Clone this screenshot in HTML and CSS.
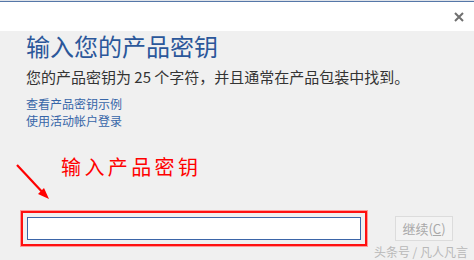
FILE: index.html
```html
<!DOCTYPE html>
<html lang="zh-CN">
<head>
<meta charset="utf-8">
<link rel="stylesheet" href="styles.css">
</head>
<body>
<div class="strip"></div>
<header class="header">
  <svg class="close" width="10" height="10" viewBox="0 0 10 10"><path d="M1 1L9 9M9 1L1 9" stroke="#707070" stroke-width="2"/></svg>
</header>
<main class="content">
  <h1 class="title">输入您的产品密钥</h1>
  <p class="desc">您的产品密钥为 25 个字符，并且通常在产品包装中找到。</p>
  <a class="link">查看产品密钥示例</a>
  <a class="link">使用活动帐户登录</a>
  <div class="note">
    <svg class="arrow" width="40" height="40" viewBox="0 0 40 40"><path d="M1 1L30 32" stroke="#ff0000" stroke-width="2.2"/><path d="M33 35L22 30L28 24Z" fill="#ff0000"/></svg>
    <span class="note-text">输入产品密钥</span>
  </div>
  <div class="row">
    <div class="redbox"><div class="input"></div></div>
    <button class="btn">继续(<u>C</u>)</button>
  </div>
</main>
<div class="mark">头条号 / 凡人凡言</div>
</body>
</html>
```
FILE: styles.css
```css
html, body {
  margin: 0;
  padding: 0;
}
body {
  width: 474px;
  height: 260px;
  overflow: hidden;
  background: #f0f0f0;
  font-family: "Noto Sans CJK SC", "Noto Sans", sans-serif;
  position: relative;
}
.strip {
  height: 2px;
  background: #dfe3e9;
  border-bottom: 1px solid #5677a8;
  box-sizing: border-box;
}
.header {
  height: 29px;
  background: #ffffff;
  display: flex;
  justify-content: flex-end;
  align-items: flex-start;
  padding-right: 10px;
  box-sizing: border-box;
}
.close {
  margin-top: 10px;
}
.content {
  padding-left: 26px;
  display: flex;
  flex-direction: column;
  align-items: flex-start;
}
.title {
  margin: 1px 0 0;
  font-size: 24px;
  line-height: 28px;
  font-weight: 400;
  color: #2b579a;
}
.desc {
  margin: 7px 0 0;
  font-size: 15px;
  line-height: 20px;
  color: #333333;
}
.link {
  font-size: 12px;
  line-height: 17px;
  color: #3766a8;
}
.desc + .link {
  margin-top: 8px;
}
.note {
  display: flex;
  align-items: flex-start;
  margin-top: 26px;
  margin-left: -10px;
  height: 56px;
}
.arrow {
  margin-top: 9px;
}
.note-text {
  margin-left: 5px;
  font-size: 20px;
  line-height: 24px;
  letter-spacing: 3.4px;
  color: #ff0000;
}
.row {
  display: flex;
  align-items: center;
  margin-left: -5px;
}
.redbox {
  width: 346px;
  height: 35px;
  box-sizing: border-box;
  border: 2px solid #ff1010;
  box-shadow: 0 0 0 1px #ff9a9a;
  padding: 4px;
}
.input {
  width: 334px;
  height: 23px;
  box-sizing: border-box;
  background: #ffffff;
  border: 1px solid #3b65a8;
}
.btn {
  margin-left: 28px;
  width: 58px;
  height: 25px;
  box-sizing: border-box;
  border: 1px solid #dcdcdc;
  background: #f3f3f3;
  color: #a8a8a8;
  font-family: "Noto Sans CJK SC", "Noto Sans", sans-serif;
  font-size: 13px;
  padding: 0;
}
.btn u {
  text-decoration: underline;
}
.mark {
  position: absolute;
  right: 6px;
  bottom: 1px;
  font-size: 12px;
  line-height: 14px;
  color: #b8b8b8;
}
```
